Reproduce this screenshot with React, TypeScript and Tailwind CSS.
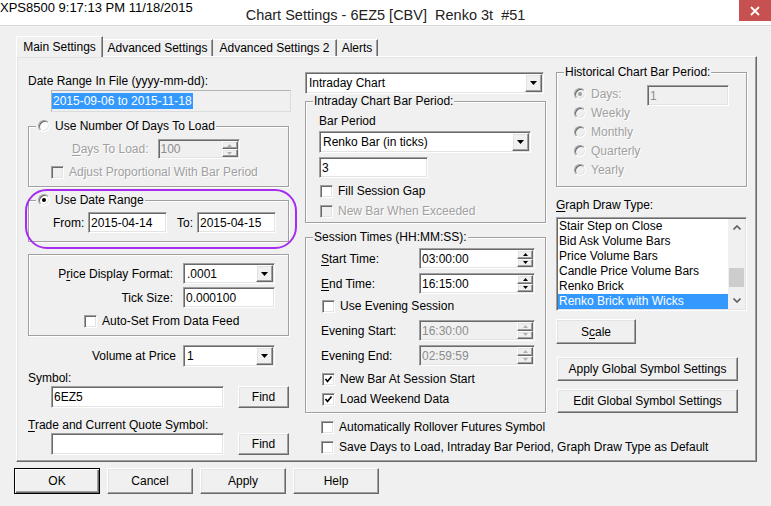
import React from "react";

// classic win32 3D edges
const sunken =
  "border border-t-[#a0a0a0] border-l-[#a0a0a0] border-b-white border-r-white shadow-[inset_1px_1px_0_#696969,inset_-1px_-1px_0_#e3e3e3]";
const raised =
  "bg-[#f0f0f0] border border-t-white border-l-white border-b-[#696969] border-r-[#696969] shadow-[inset_-1px_-1px_0_#a0a0a0,inset_1px_1px_0_#e3e3e3]";
const grayText = "text-[#a0a0a0] [text-shadow:1px_1px_0_#fff]";

type Kids = { children?: React.ReactNode; className?: string };

function U({ children }: Kids) {
  return <span className="underline decoration-1 underline-offset-[2px]">{children}</span>;
}

function Check({ checked = false, disabled = false }: { checked?: boolean; disabled?: boolean }) {
  return (
    <span
      className={`${sunken} ${disabled ? "bg-[#f0f0f0]" : "bg-white"} w-[13px] h-[13px] flex items-center justify-center shrink-0`}
    >
      {checked && (
        <svg width="9" height="9" viewBox="0 0 9 9">
          <path d="M1.5 4 L3.5 6.5 L7.5 1.5" fill="none" stroke="#000" strokeWidth="1.7" />
        </svg>
      )}
    </span>
  );
}

function Radio({ checked = false, disabled = false }: { checked?: boolean; disabled?: boolean }) {
  return (
    <span
      className={`w-[12px] h-[12px] rounded-full border border-t-[#a0a0a0] border-l-[#a0a0a0] border-b-white border-r-white shadow-[inset_1px_1px_0_#696969,inset_-1px_-1px_0_#e3e3e3] ${
        disabled ? "bg-[#f0f0f0]" : "bg-white"
      } flex items-center justify-center shrink-0`}
    >
      {checked && <span className={`w-[4px] h-[4px] rounded-full ${disabled ? "bg-[#a0a0a0]" : "bg-black"}`} />}
    </span>
  );
}

function CheckRow({
  label,
  checked,
  disabled,
  className = "",
}: {
  label: React.ReactNode;
  checked?: boolean;
  disabled?: boolean;
  className?: string;
}) {
  return (
    <div className={`flex items-center gap-[5px] h-4 ${className}`}>
      <Check checked={checked} disabled={disabled} />
      <span className={disabled ? grayText : ""}>{label}</span>
    </div>
  );
}

function DropBtn() {
  return (
    <span className={`${raised} w-[17px] flex items-center justify-center shrink-0`}>
      <svg width="7" height="4" viewBox="0 0 7 4">
        <path d="M0 0h7L3.5 4z" fill="#000" />
      </svg>
    </span>
  );
}

function Combo({ value, className = "" }: { value: string; className?: string }) {
  return (
    <div className={`${sunken} bg-white p-[1px] flex items-stretch ${className}`}>
      <span className="flex-1 pl-[2px] flex items-center">{value}</span>
      <DropBtn />
    </div>
  );
}

function Spin({ disabled = false }: { disabled?: boolean }) {
  const c = disabled ? "#b0b0b0" : "#000";
  return (
    <span className="flex flex-col w-[16px] shrink-0">
      <span className={`${raised} flex-1 flex items-center justify-center`}>
        <svg width="5" height="3" viewBox="0 0 5 3">
          <path d="M0 3h5L2.5 0z" fill={c} />
        </svg>
      </span>
      <span className={`${raised} flex-1 flex items-center justify-center`}>
        <svg width="5" height="3" viewBox="0 0 5 3">
          <path d="M0 0h5L2.5 3z" fill={c} />
        </svg>
      </span>
    </span>
  );
}

function Edit({
  value = "",
  className = "",
  disabled = false,
  spin = false,
}: {
  value?: string;
  className?: string;
  disabled?: boolean;
  spin?: boolean;
}) {
  return (
    <div
      className={`${sunken} ${disabled ? "bg-[#f0f0f0] text-[#8d8d8d]" : "bg-white"} p-[1px] flex items-stretch ${className}`}
    >
      <span className="flex-1 pl-[1px] flex items-center">{value}</span>
      {spin && <Spin disabled={disabled} />}
    </div>
  );
}

function Btn({ children, className = "", def = false }: Kids & { def?: boolean }) {
  const edge = def
    ? "bg-[#f0f0f0] border border-black shadow-[inset_1px_1px_0_#fff,inset_-1px_-1px_0_#696969,inset_-2px_-2px_0_#a0a0a0]"
    : raised;
  return (
    <button type="button" className={`${edge} flex items-center justify-center ${className}`}>
      {children}
    </button>
  );
}

function Group({ legend, className = "", children }: Kids & { legend?: React.ReactNode }) {
  return (
    <fieldset className={`border border-[#a0a0a0] shadow-[inset_1px_1px_0_#fff,1px_1px_0_#fff] ${className}`}>
      {legend && <legend className="ml-[7px] px-[1px] bg-[#f0f0f0] leading-[14px]">{legend}</legend>}
      {children}
    </fieldset>
  );
}

function Chevron({ up }: { up?: boolean }) {
  return (
    <svg width="8" height="5" viewBox="0 0 8 5">
      <path d={up ? "M0.5 4.5 L4 1 L7.5 4.5" : "M0.5 0.5 L4 4 L7.5 0.5"} fill="none" stroke="#606060" strokeWidth="1.6" />
    </svg>
  );
}

const drawTypes = [
  "Stair Step on Close",
  "Bid Ask Volume Bars",
  "Price Volume Bars",
  "Candle Price Volume Bars",
  "Renko Brick",
  "Renko Brick with Wicks",
];

function LeftColumn() {
  return (
    <div className="w-[263px] flex flex-col">
      <div className="mt-[16px] h-4">Date Range In File (yyyy-mm-dd):</div>
      <div className="mt-[1px] ml-[23px] w-[240px] h-[22px] border border-[#b4b4b4] border-b-[#dcdcdc] border-r-[#dcdcdc] flex items-center">
        <span className="bg-[#3399ff] text-white leading-4 px-[1px]">2015-09-06 to 2015-11-18</span>
      </div>

      <Group
        className="mt-[7px] w-[261px] pb-[6px]"
        legend={
          <span className="flex items-center gap-[5px] pl-[1px]">
            <Radio />
            <span>Use Number Of Days To Load</span>
          </span>
        }
      >
        <div className="mt-[6px] flex items-center h-[20px]">
          <span className={`ml-[43px] ${grayText}`}>
            <U>D</U>ays To Load:
          </span>
          <Edit className="ml-[9px] w-[82px] h-[20px]" value="100" disabled spin />
        </div>
        <CheckRow className="mt-[5px] ml-[22px]" label="Adjust Proportional With Bar Period" disabled />
      </Group>

      <div className="relative mt-[6px]">
        <Group
          className="w-[261px] pb-[8px]"
          legend={
            <span className="flex items-center gap-[5px] pl-[1px]">
              <Radio checked />
              <span>Use Date Range</span>
            </span>
          }
        >
          <div className="mt-[5px] flex items-center h-[21px]">
            <span className="ml-[24px] w-[35px]">From:</span>
            <Edit className="w-[79px] h-[21px]" value="2015-04-14" />
            <span className="ml-[10px] w-[20px]">To:</span>
            <Edit className="w-[79px] h-[21px]" value="2015-04-15" />
          </div>
        </Group>
        {/* annotation oval drawn over the group */}
        <div className="absolute left-[-3px] top-[-4px] w-[272px] h-[60px] rounded-[22px] border-2 border-[#a52cf0] pointer-events-none" />
      </div>

      <Group className="mt-[12px] w-[261px] pb-[6px]">
        <div className="mt-[8px] flex items-center h-[21px]">
          <span className="w-[144px] text-right">
            P<U>r</U>ice Display Format:
          </span>
          <Combo className="ml-[10px] w-[92px] h-[21px]" value=".0001" />
        </div>
        <div className="mt-[3px] flex items-center h-[21px]">
          <span className="w-[144px] text-right">Tick Size:</span>
          <Edit className="ml-[10px] w-[92px] h-[21px]" value="0.000100" />
        </div>
        <CheckRow className="mt-[5px] ml-[55px]" label="Auto-Set From Data Feed" />
      </Group>

      <div className="mt-[9px] flex items-center h-[22px]">
        <span className="w-[148px] text-right">Volume at Price</span>
        <Combo className="ml-[7px] w-[92px] h-[22px]" value="1" />
      </div>

      <div className="mt-[3px] h-4">Symbol:</div>
      <div className="flex items-center h-[22px]">
        <Edit className="ml-[23px] w-[173px] h-[22px]" value="6EZ5" />
        <Btn className="ml-[14px] w-[51px] h-[22px]">Find</Btn>
      </div>

      <div className="mt-[9px] h-4">
        <U>T</U>rade and Current Quote Symbol:
      </div>
      <div className="flex items-center h-[22px]">
        <Edit className="ml-[23px] w-[173px] h-[22px]" />
        <Btn className="ml-[14px] w-[51px] h-[22px]">Find</Btn>
      </div>
    </div>
  );
}

function TimeRow({
  label,
  value,
  disabled,
  className = "",
}: {
  label: React.ReactNode;
  value: string;
  disabled?: boolean;
  className?: string;
}) {
  return (
    <div className={`flex items-center h-[21px] ${className}`}>
      <span className="ml-[15px] w-[98px]">{label}</span>
      <Edit className="w-[116px] h-[21px]" value={value} disabled={disabled} spin />
    </div>
  );
}

function MiddleColumn() {
  return (
    <div className="w-[241px] flex flex-col">
      <Combo className="mt-[15px] w-[239px] h-[22px]" value="Intraday Chart" />

      <Group className="w-[241px] pb-[3px]" legend="Intraday Chart Bar Period:">
        <div className="mt-[5px] ml-[13px] h-4">Bar Period</div>
        <Combo className="mt-[2px] ml-[13px] w-[212px] h-[22px]" value="Renko Bar (in ticks)" />
        <Edit className="mt-[4px] ml-[13px] w-[109px] h-[21px]" value="3" />
        <CheckRow className="mt-[5px] ml-[14px]" label="Fill Session Gap" />
        <CheckRow className="mt-[4px] ml-[14px]" label="New Bar When Exceeded" disabled />
      </Group>

      <Group className="mt-[7px] w-[241px] pb-[5px]" legend="Session Times (HH:MM:SS):">
        <TimeRow
          className="mt-[4px]"
          label={
            <>
              <U>S</U>tart Time:
            </>
          }
          value="03:00:00"
        />
        <TimeRow
          className="mt-[4px]"
          label={
            <>
              <U>E</U>nd Time:
            </>
          }
          value="16:15:00"
        />
        <CheckRow className="mt-[4px] ml-[16px]" label="Use Evening Session" />
        <TimeRow className="mt-[6px]" label="Evening Start:" value="16:30:00" disabled />
        <TimeRow className="mt-[4px]" label="Evening End:" value="02:59:59" disabled />
        <CheckRow className="mt-[5px] ml-[16px]" label="New Bar At Session Start" checked />
        <CheckRow className="mt-[4px] ml-[16px]" label="Load Weekend Data" checked />
      </Group>
    </div>
  );
}

function RadioRow({ label, checked, children }: { label: string; checked?: boolean; children?: React.ReactNode }) {
  return (
    <div className="flex items-start h-[19px]">
      <div className="ml-[17px] h-[19px] flex items-center gap-[5px] w-[73px]">
        <Radio checked={checked} disabled />
        <span className={grayText}>{label}</span>
      </div>
      {children}
    </div>
  );
}

function RightColumn() {
  return (
    <div className="w-[191px] flex flex-col">
      <Group className="mt-[8px] w-[191px] pb-[7px]" legend="Historical Chart Bar Period:">
        <div className="mt-[5px]">
          <RadioRow label="Days:" checked>
            <Edit className="mt-[1px] w-[82px] h-[21px]" value="1" disabled />
          </RadioRow>
          <RadioRow label="Weekly" />
          <RadioRow label="Monthly" />
          <RadioRow label="Quarterly" />
          <RadioRow label="Yearly" />
        </div>
      </Group>

      <div className="mt-[10px] h-4">
        <U>G</U>raph Draw Type:
      </div>
      <div className={`${sunken} bg-white p-[1px] mt-[4px] h-[94px] w-[191px] flex`}>
        <div className="flex-1 flex flex-col">
          {drawTypes.map((t, i) => (
            <div
              key={t}
              className={`h-[15px] leading-[15px] pl-[1px] ${i === 5 ? "bg-[#3399ff] text-white" : ""}`}
            >
              {t}
            </div>
          ))}
        </div>
        <div className="w-[17px] bg-[#f0f0f0] flex flex-col">
          <div className="h-[17px] flex items-center justify-center">
            <Chevron up />
          </div>
          <div className="flex-1">
            <div className="mt-[32px] mx-[1px] h-[19px] bg-[#cdcdcd]" />
          </div>
          <div className="h-[17px] flex items-center justify-center">
            <Chevron />
          </div>
        </div>
      </div>

      <Btn className="mt-[8px] w-[80px] h-[25px]">
        S<U>c</U>ale
      </Btn>
      <Btn className="mt-[13px] ml-[1px] w-[181px] h-[24px]">Apply Global Symbol Settings</Btn>
      <Btn className="mt-[8px] ml-[1px] w-[181px] h-[24px]">Edit Global Symbol Settings</Btn>
    </div>
  );
}

export default function App() {
  const tabs = [
    { label: "Main Settings", w: "w-[87px]" },
    { label: "Advanced Settings", w: "w-[110px]" },
    { label: "Advanced Settings 2", w: "w-[124px]" },
    { label: "Alerts", w: "w-[41px]" },
  ];

  return (
    <div className="w-[771px] h-[506px] bg-[#f0f0f0] text-black text-[12px] leading-4 font-['Liberation_Sans',Arial,sans-serif] flex flex-col overflow-hidden">
      {/* title bar */}
      <div className="h-[26px] bg-white border-b border-[#d9d9d9] grid grid-cols-[1fr_auto_1fr] shrink-0">
        <div className="text-[13px] leading-4 self-start">XPS8500 9:17:13 PM 11/18/2015</div>
        <div className="text-[14.5px] leading-4 mt-[7px] whitespace-pre text-[#222]">
          Chart Settings - 6EZ5 [CBV]  Renko 3t  #51
        </div>
        <div className="flex justify-end">
          <div className="w-[32px] h-[21px] bg-[#c75050] flex items-center justify-center">
            <svg width="10" height="10" viewBox="0 0 10 10">
              <path d="M1 1L9 9M9 1L1 9" stroke="#fff" strokeWidth="1.8" />
            </svg>
          </div>
        </div>
      </div>

      {/* tab strip */}
      <div className="mt-[10px] ml-[16px] h-[20px] flex items-end">
        {tabs.map((t, i) =>
          i === 0 ? (
            <div
              key={t.label}
              className={`${t.w} h-[21px] -mb-[1px] relative z-10 bg-[#f0f0f0] border-t border-l border-r border-t-white border-l-white border-r-[#696969] shadow-[inset_-1px_0_0_#a0a0a0] flex justify-center pt-[2px]`}
            >
              {t.label}
            </div>
          ) : (
            <div
              key={t.label}
              className={`${t.w} h-[17px] border-t border-r border-t-white border-r-[#696969] shadow-[inset_-1px_0_0_#a0a0a0] flex justify-center items-center`}
            >
              {t.label}
            </div>
          )
        )}
      </div>

      {/* tab page */}
      <div className="ml-[16px] w-[741px] h-[406px] border border-t-white border-l-white border-b-[#696969] border-r-[#696969] shadow-[inset_-1px_-1px_0_#a0a0a0,inset_1px_1px_0_#e3e3e3] flex pl-[11px]">
        <LeftColumn />
        <div className="ml-[14px] flex flex-col">
          <div className="flex gap-[10px]">
            <MiddleColumn />
            <RightColumn />
          </div>
          <CheckRow className="mt-[6px] ml-[16px]" label="Automatically Rollover Futures Symbol" />
          <CheckRow className="mt-[4px] ml-[16px]" label="Save Days to Load, Intraday Bar Period, Graph Draw Type as Default" />
        </div>
      </div>

      {/* dialog buttons */}
      <div className="mt-[6px] ml-[14px] flex gap-[7px]">
        <Btn def className="w-[86px] h-[26px]">
          OK
        </Btn>
        <Btn className="w-[86px] h-[26px]">Cancel</Btn>
        <Btn className="w-[86px] h-[26px]">Apply</Btn>
        <Btn className="w-[86px] h-[26px]">Help</Btn>
      </div>
    </div>
  );
}
